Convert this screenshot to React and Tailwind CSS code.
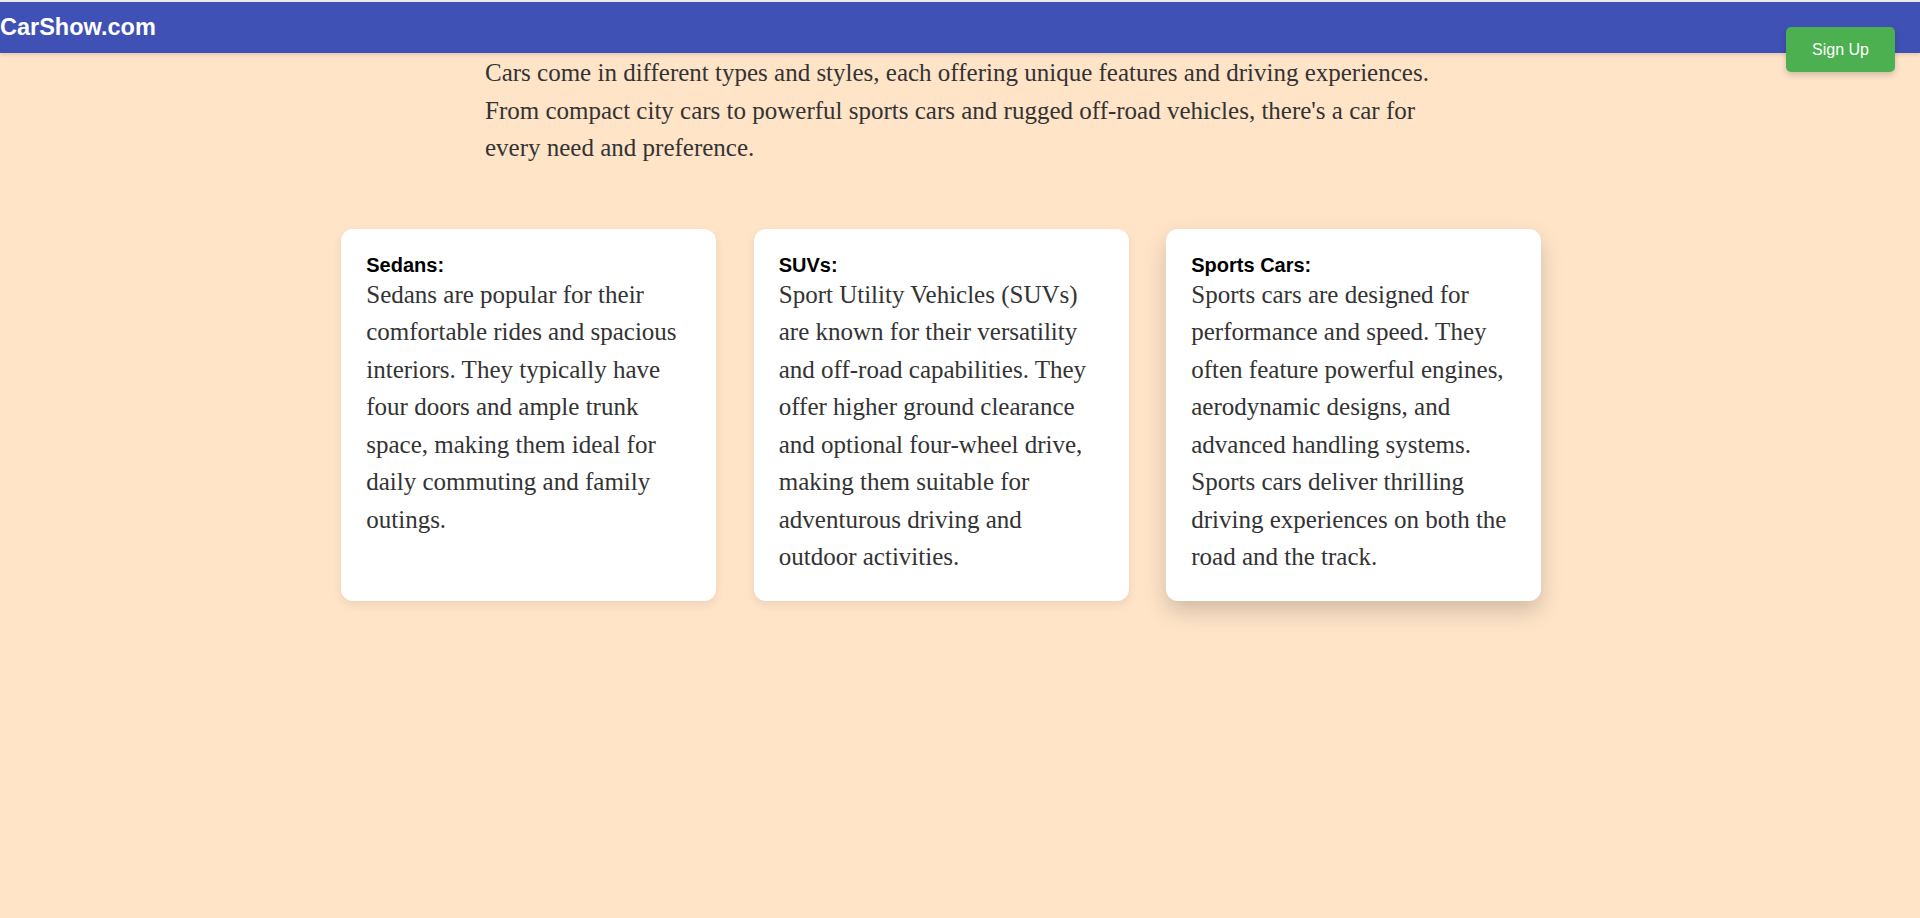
export default function App() {
  const cards = [
    {
      title: "Sedans:",
      text: "Sedans are popular for their comfortable rides and spacious interiors. They typically have four doors and ample trunk space, making them ideal for daily commuting and family outings.",
      shadow: "shadow-[0_4px_10px_rgba(0,0,0,0.08)]",
    },
    {
      title: "SUVs:",
      text: "Sport Utility Vehicles (SUVs) are known for their versatility and off-road capabilities. They offer higher ground clearance and optional four-wheel drive, making them suitable for adventurous driving and outdoor activities.",
      shadow: "shadow-[0_4px_10px_rgba(0,0,0,0.08)]",
    },
    {
      title: "Sports Cars:",
      text: "Sports cars are designed for performance and speed. They often feature powerful engines, aerodynamic designs, and advanced handling systems. Sports cars deliver thrilling driving experiences on both the road and the track.",
      shadow: "shadow-[0_10px_22px_rgba(0,0,0,0.18)]",
    },
  ];

  return (
    <div className="relative min-h-screen bg-[#FFE4C8]">
      <div className="h-[2px] bg-[#ececf2]" />
      <header className="flex h-[51px] items-center bg-[#3F51B5] shadow-[0_2px_4px_rgba(0,0,0,0.12)]">
        <span
          className="text-[23.5px] font-bold text-white"
          style={{ fontFamily: '"Liberation Sans", Arial, sans-serif' }}
        >
          CarShow.com
        </span>
      </header>
      <button
        className="absolute right-[25px] top-[27px] flex h-[45px] w-[109px] items-center justify-center rounded-[5px] bg-[#4CAF50] text-[16px] text-white shadow-[0_3px_6px_rgba(0,0,0,0.18)]"
        style={{ fontFamily: '"Liberation Sans", Arial, sans-serif' }}
      >
        Sign Up
      </button>

      <p
        className="mx-auto mt-[1px] max-w-[950px] text-[25px] leading-[1.5] text-[#333]"
        style={{ fontFamily: '"Liberation Serif", "Times New Roman", serif' }}
      >
        Cars come in different types and styles, each offering unique features and driving experiences. From compact city cars to powerful sports cars and rugged off-road vehicles, there's a car for every need and preference.
      </p>

      <div className="mt-[62px] flex justify-center">
        {cards.map((c) => (
          <div
            key={c.title}
            className={`mr-[37.5px] w-[375px] rounded-xl bg-white p-[25px] ${c.shadow}`}
          >
            <h3
              className="text-[20px] leading-[1.12] font-bold text-black"
              style={{ fontFamily: '"Liberation Sans", Arial, sans-serif' }}
            >
              {c.title}
            </h3>
            <p
              className="text-[25px] leading-[1.5] text-[#333]"
              style={{ fontFamily: '"Liberation Serif", "Times New Roman", serif' }}
            >
              {c.text}
            </p>
          </div>
        ))}
      </div>
    </div>
  );
}
